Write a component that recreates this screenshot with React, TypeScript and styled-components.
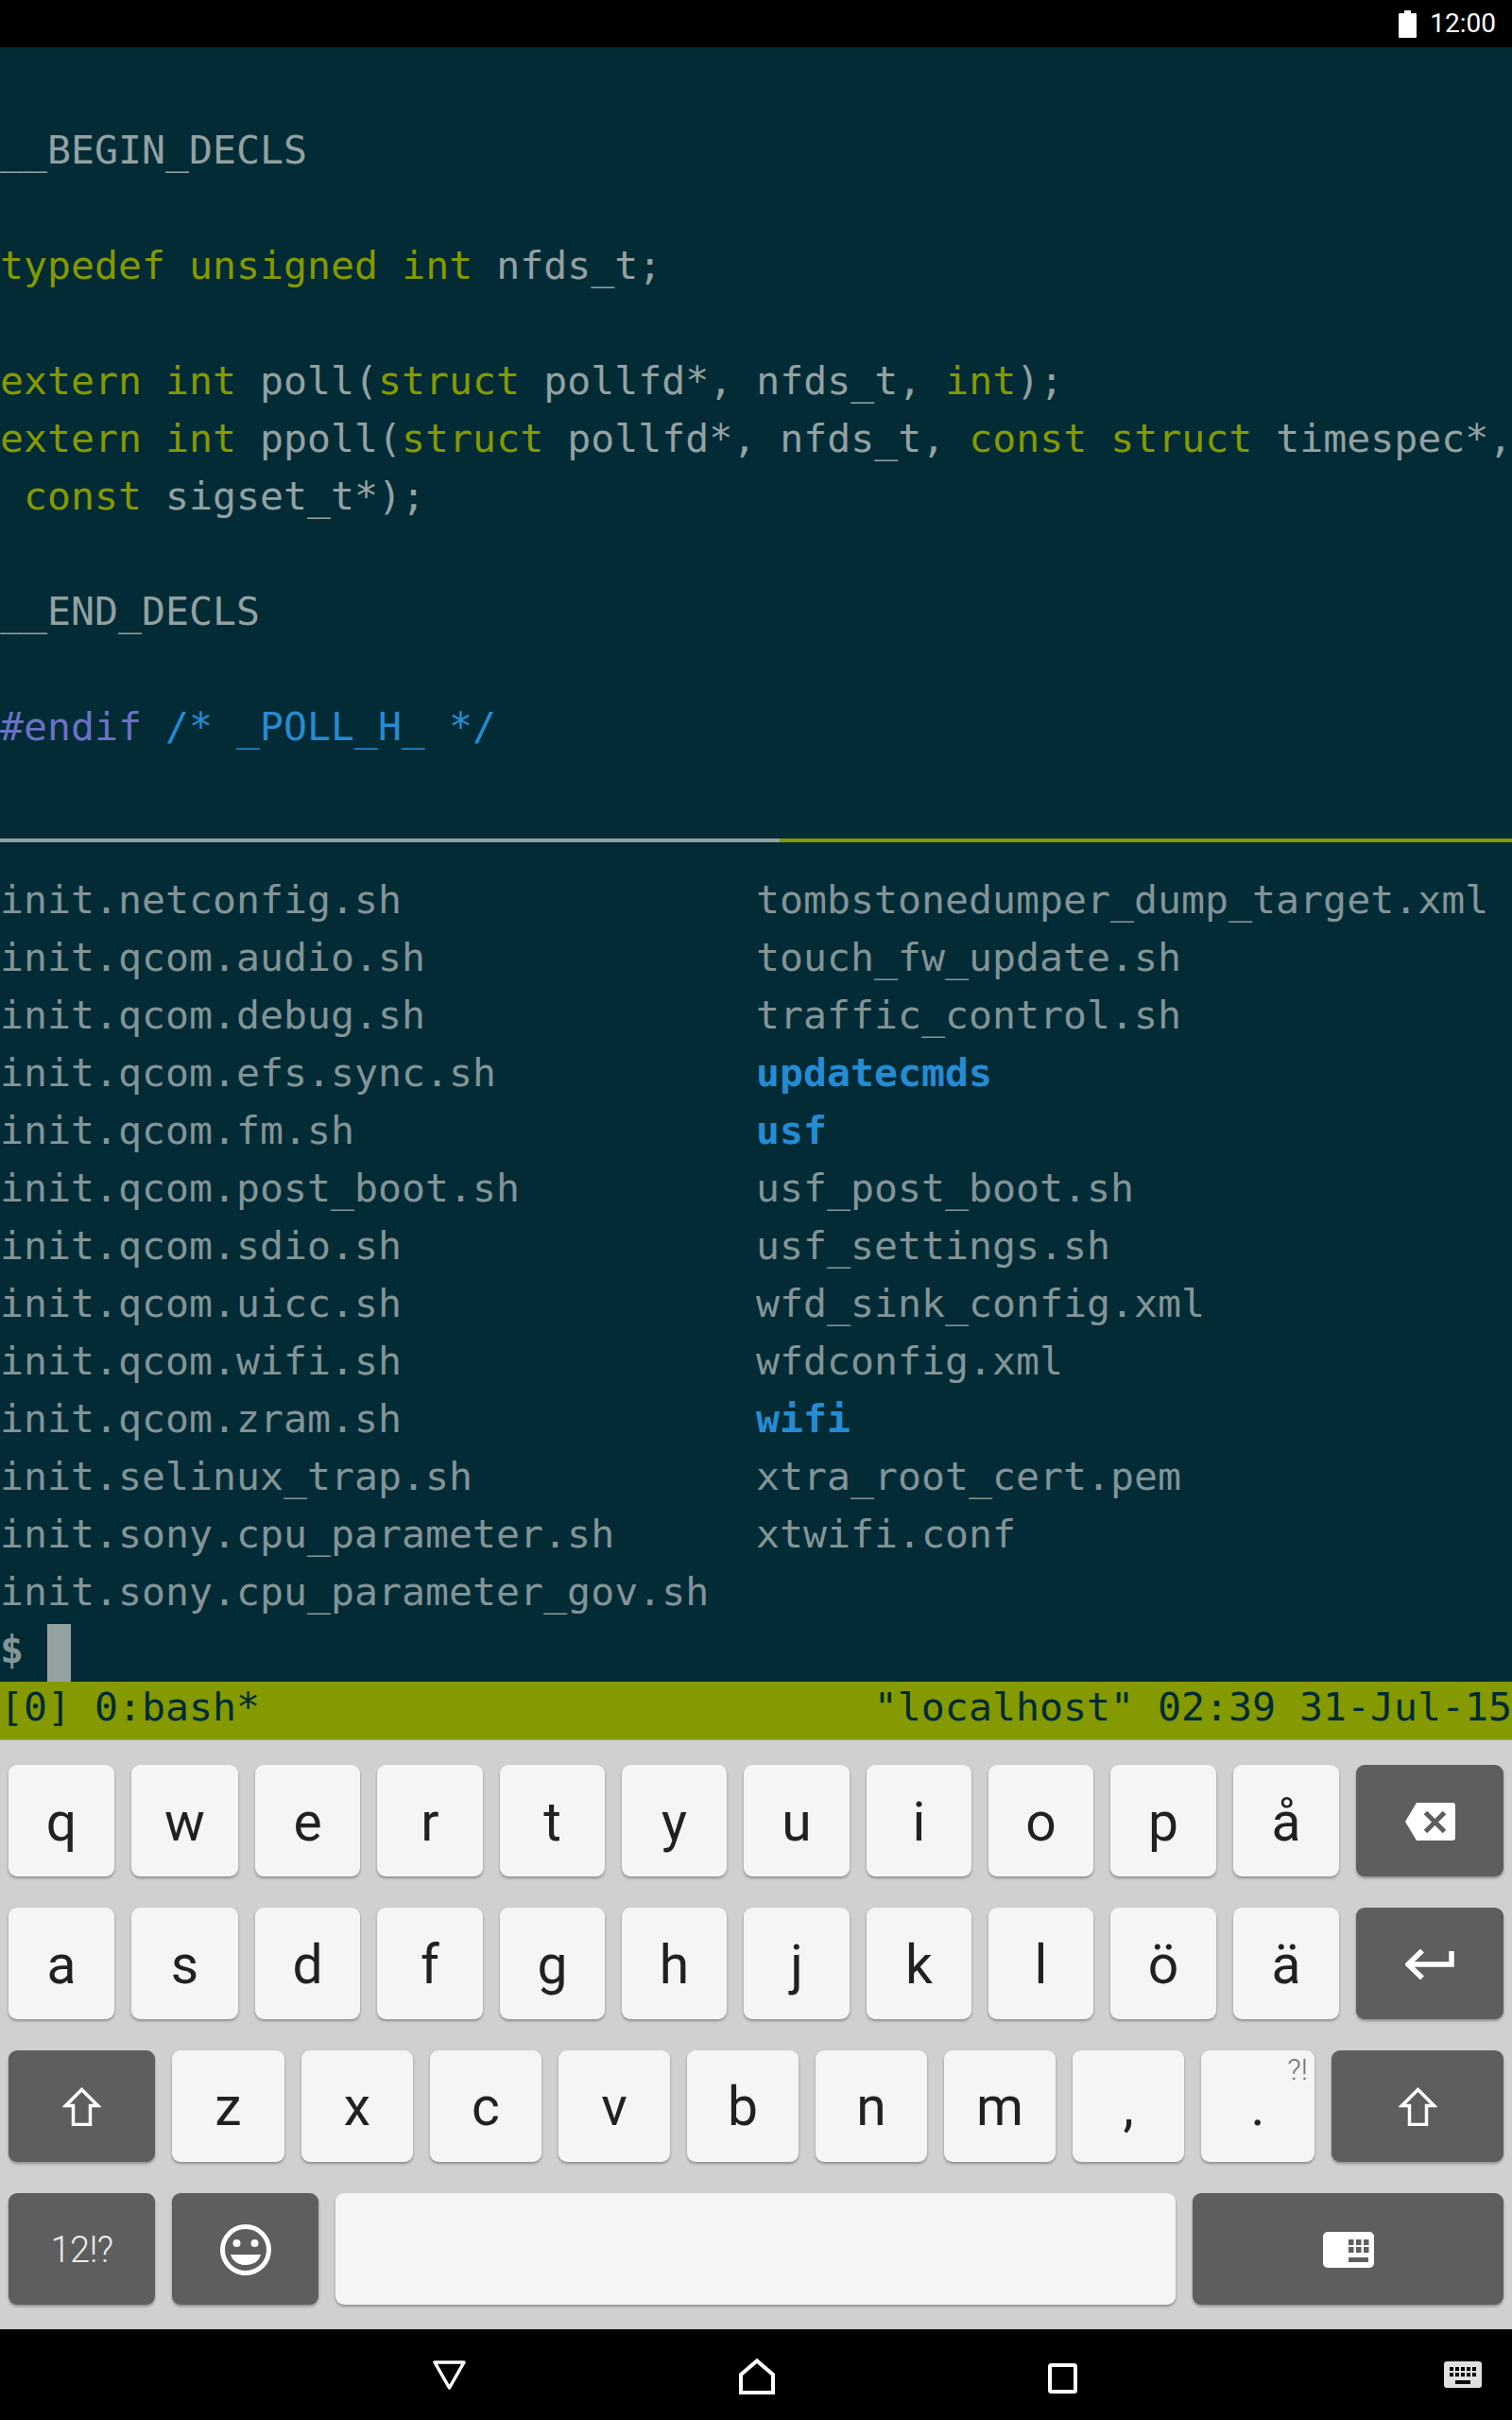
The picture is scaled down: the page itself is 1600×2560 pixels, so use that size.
import React from "react";
import styled, { createGlobalStyle } from "styled-components";

const Global = createGlobalStyle`
  html, body { margin: 0; padding: 0; background: #000; }
  #root { width: 1600px; height: 2560px; }
`;

const C = { base: "#93a1a1", dim: "#839496", olive: "#859900", blue: "#268bd2", violet: "#6c71c4", bg: "#022b36" };

const Screen = styled.div`
  width: 1600px; height: 2560px; display: flex; flex-direction: column; overflow: hidden;
`;
const StatusBar = styled.header`
  height: 50px; flex: none; background: #000; display: flex; align-items: center; justify-content: flex-end;
  gap: 14px; padding-right: 17px; color: #fff; font: 400 28px/50px Roboto, sans-serif;
`;
const Terminal = styled.main`
  height: 1790px; flex: none; background: ${C.bg}; padding-top: 21px; box-sizing: border-box;
  font-family: "DejaVu Sans Mono", monospace; font-size: 41.5px; letter-spacing: 0.02px; color: ${C.base};
`;
const Line = styled.div`
  height: 61px; line-height: 53px; white-space: pre; display: block;
`;
const Tok = styled.span<{ $c: string; $b?: boolean }>`
  color: ${(p) => p.$c}; font-weight: ${(p) => (p.$b ? 700 : 400)};
`;
const Divider = styled.div`
  height: 61px; display: flex; align-items: flex-start; padding-top: 23px; box-sizing: border-box;
`;
const DivPart = styled.div<{ $c: string; $w: string }>`
  height: 4px; background: ${(p) => p.$c}; flex: ${(p) => p.$w};
`;
const ListRow = styled.div`
  height: 61px; line-height: 53px; white-space: pre; display: grid; grid-template-columns: 800px 800px; color: ${C.dim};
`;
const Cursor = styled.span`
  display: inline-block; width: 25px; height: 61px; background: ${C.base}; vertical-align: top;
`;
const TmuxBar = styled.div`
  height: 61px; line-height: 53px; white-space: pre; background: ${C.olive}; color: #002b36;
  display: flex; justify-content: space-between;
`;
const Keyboard = styled.section`
  height: 624px; flex: none; box-sizing: border-box; background: #d0d0d0; border-top: 1px solid #a0a0a0;
  padding: 26px 9px; display: flex; flex-direction: column; gap: 32.5px;
`;
const KeyRow = styled.div`
  flex: 1; display: flex; gap: 18px;
`;
const Key = styled.div<{ $w: number; $dark?: boolean }>`
  flex: 0 0 ${(p) => p.$w}px; position: relative; display: flex; align-items: center; justify-content: center;
  border-radius: 9px; background: ${(p) => (p.$dark ? "#5e5e5e" : "#f5f5f5")};
  box-shadow: 0 2px 3px rgba(0,0,0,.32);
  color: #212121; font: 400 57px/1 Roboto, sans-serif; padding-top: 2px; box-sizing: border-box;
`;
const ModeLabel = styled.span`
  color: #ececec; font: 300 38px/1 Roboto, sans-serif; letter-spacing: -0.5px;
`;
const Hint = styled.span`
  position: absolute; top: 4px; right: 7px; color: #757575; font: 300 32px/1 Roboto, sans-serif;
`;
const NavBar = styled.nav`
  height: 96px; flex: none; background: #000; display: flex; align-items: center; gap: 289px;
  padding: 0 32px 0 458px; box-sizing: border-box;
`;
const NavEnd = styled.div`
  margin-left: 99px; display: flex;
`;

const rows: [string, string?, boolean?][] = [
  ["init.netconfig.sh", "tombstonedumper_dump_target.xml"],
  ["init.qcom.audio.sh", "touch_fw_update.sh"],
  ["init.qcom.debug.sh", "traffic_control.sh"],
  ["init.qcom.efs.sync.sh", "updatecmds", true],
  ["init.qcom.fm.sh", "usf", true],
  ["init.qcom.post_boot.sh", "usf_post_boot.sh"],
  ["init.qcom.sdio.sh", "usf_settings.sh"],
  ["init.qcom.uicc.sh", "wfd_sink_config.xml"],
  ["init.qcom.wifi.sh", "wfdconfig.xml"],
  ["init.qcom.zram.sh", "wifi", true],
  ["init.selinux_trap.sh", "xtra_root_cert.pem"],
  ["init.sony.cpu_parameter.sh", "xtwifi.conf"],
  ["init.sony.cpu_parameter_gov.sh"],
];

const O = ({ children }: { children: string }) => <Tok $c={C.olive}>{children}</Tok>;

const Battery = () => (
  <svg width="19" height="29" viewBox="0 0 19 29"><path d="M6 0h7v3h5a1 1 0 0 1 1 1v24a1 1 0 0 1-1 1H1a1 1 0 0 1-1-1V4a1 1 0 0 1 1-1h5z" fill="#fff" /></svg>
);
const Backspace = () => (
  <svg width="53" height="40" viewBox="0 0 53 40">
    <path d="M12 0h38a3 3 0 0 1 3 3v34a3 3 0 0 1-3 3H12L0 20z" fill="#fff" />
    <path d="M21.5 10.500l20 20M41.500 10.500l-20 20" stroke="#5e5e5e" strokeWidth="5" />
  </svg>
);
const Enter = () => (
  <svg width="52" height="32" viewBox="0 0 52 32" fill="none" stroke="#fff" strokeWidth="5.500">
    <path d="M49 2v14H4" />
    <path d="M18 1.500L3 16l15 14.500" />
  </svg>
);
const Shift = () => (
  <svg width="41" height="41" viewBox="0 0 41 41" fill="none" stroke="#fff" strokeWidth="3.500">
    <path d="M20.500 2.500L37.500 19.500H29.500V39.500H11.500V19.500H3.500z" />
  </svg>
);
const Smile = () => (
  <svg width="54" height="54" viewBox="0 0 54 54">
    <circle cx="27" cy="27" r="24.500" fill="none" stroke="#fff" strokeWidth="5" />
    <circle cx="17.500" cy="20" r="4" fill="#fff" />
    <circle cx="36.500" cy="20" r="4" fill="#fff" />
    <path d="M11 32h32c-2 7-8 11-16 11s-14-4-16-11z" fill="#fff" />
  </svg>
);
const HideKb = () => (
  <svg width="54" height="38" viewBox="0 0 54 38">
    <rect width="54" height="38" rx="5" fill="#fff" />
    {[27, 35, 43].flatMap((x) => [8, 16].map((y) => <rect key={`${x}-${y}`} x={x} y={y} width="5.500" height="6" fill="#5e5e5e" />))}
    <rect x="27" y="27" width="21" height="5" fill="#5e5e5e" />
  </svg>
);
const Back = () => (
  <svg width="35" height="48" viewBox="0 0 35 48" fill="none" stroke="#fff" strokeWidth="3.500" strokeLinejoin="round">
    <path d="M2 11H33L17.500 38z" />
  </svg>
);
const Home = () => (
  <svg width="38" height="48" viewBox="0 0 38 48" fill="none" stroke="#fff" strokeWidth="4">
    <path d="M2 43V24L19 9.500 36 24V43z" />
  </svg>
);
const Recents = () => (
  <svg width="31" height="48" viewBox="0 0 31 48" fill="none" stroke="#fff" strokeWidth="4">
    <rect x="2" y="14" width="27" height="28" rx="1.500" />
  </svg>
);
const NavKb = () => (
  <svg width="40" height="48" viewBox="0 0 40 48">
    <rect y="10" width="40" height="28" rx="3" fill="#e0e0e0" />
    {[6, 12, 18, 24, 30].flatMap((x) => [16, 22].map((y) => <rect key={`${x}-${y}`} x={x} y={y} width="4" height="4" fill="#000" />))}
    <rect x="12" y="30" width="16" height="4" fill="#000" />
  </svg>
);

const topWidths = [112, 113, 111, 112, 111, 111, 112, 111, 111, 112, 112];
const letters = (s: string) => s.split("").map((c, i) => <Key key={c} $w={topWidths[i]}>{c}</Key>);
const lowerWidths = [119, 118, 118, 118, 118, 118, 118, 118];

export default function App() {
  return (
    <Screen>
      <Global />
      <StatusBar>
        <Battery />
        <span>12:00</span>
      </StatusBar>
      <Terminal>
        <Line> </Line>
        <Line>__BEGIN_DECLS</Line>
        <Line> </Line>
        <Line><O>typedef</O> <O>unsigned</O> <O>int</O> nfds_t;</Line>
        <Line> </Line>
        <Line><O>extern</O> <O>int</O> poll(<O>struct</O> pollfd*, nfds_t, <O>int</O>);</Line>
        <Line><O>extern</O> <O>int</O> ppoll(<O>struct</O> pollfd*, nfds_t, <O>const</O> <O>struct</O> timespec*,</Line>
        <Line> <O>const</O> sigset_t*);</Line>
        <Line> </Line>
        <Line>__END_DECLS</Line>
        <Line> </Line>
        <Line><Tok $c={C.violet}>#endif</Tok> <Tok $c={C.blue}>/* _POLL_H_ */</Tok></Line>
        <Line> </Line>
        <Divider>
          <DivPart $c={C.base} $w="0 0 825px" />
          <DivPart $c={C.olive} $w="1" />
        </Divider>
        {rows.map(([a, b, dir]) => (
          <ListRow key={a}>
            <span>{a}</span>
            {b ? <Tok $c={dir ? C.blue : C.dim} $b={dir}>{b}</Tok> : <span />}
          </ListRow>
        ))}
        <Line><Tok $c={C.dim} $b>$ </Tok><Cursor /></Line>
        <TmuxBar>
          <span>[0] 0:bash*</span>
          <span>"localhost" 02:39 31-Jul-15</span>
        </TmuxBar>
      </Terminal>
      <Keyboard>
        <KeyRow>
          {letters("qwertyuiopå")}
          <Key $w={156} $dark><Backspace /></Key>
        </KeyRow>
        <KeyRow>
          {letters("asdfghjklöä")}
          <Key $w={156} $dark><Enter /></Key>
        </KeyRow>
        <KeyRow>
          <Key $w={155} $dark><Shift /></Key>
          {"zxcvbnm,".split("").map((c, i) => <Key key={c} $w={lowerWidths[i]}>{c}</Key>)}
          <Key $w={120}>.<Hint>?!</Hint></Key>
          <Key $w={182} $dark><Shift /></Key>
        </KeyRow>
        <KeyRow>
          <Key $w={155} $dark><ModeLabel>12!?</ModeLabel></Key>
          <Key $w={155} $dark><Smile /></Key>
          <Key $w={889} />
          <Key $w={329} $dark><HideKb /></Key>
        </KeyRow>
      </Keyboard>
      <NavBar>
        <Back />
        <Home />
        <Recents />
        <NavEnd><NavKb /></NavEnd>
      </NavBar>
    </Screen>
  );
}
